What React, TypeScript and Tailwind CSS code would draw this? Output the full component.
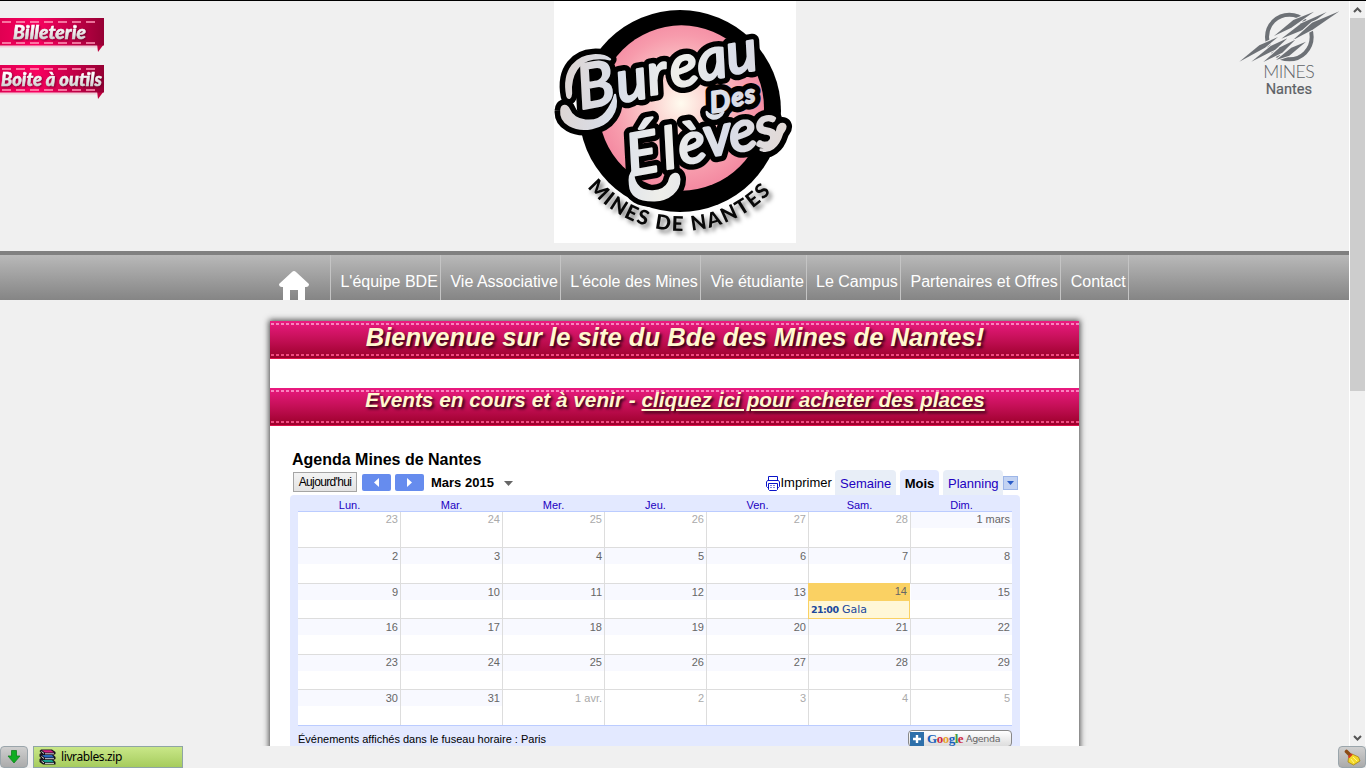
import React from "react";

const days = ["Lun.", "Mar.", "Mer.", "Jeu.", "Ven.", "Sam.", "Dim."];

const weeks: { height: string; line: string; cells: string[] }[] = [
  { height: "h-9", line: "leading-[15px]", cells: ["23", "24", "25", "26", "27", "28", "1 mars"] },
  { height: "h-9", line: "leading-[17px]", cells: ["2", "3", "4", "5", "6", "7", "8"] },
  { height: "h-[35px]", line: "leading-[17px]", cells: ["9", "10", "11", "12", "13", "14", "15"] },
  { height: "h-9", line: "leading-[17px]", cells: ["16", "17", "18", "19", "20", "21", "22"] },
  { height: "h-[35px]", line: "leading-[15px]", cells: ["23", "24", "25", "26", "27", "28", "29"] },
  { height: "h-[35px]", line: "leading-[17px]", cells: ["30", "31", "1 avr.", "2", "3", "4", "5"] },
];

const menu = [
  { label: "L'équipe BDE", width: "w-[110px]" },
  { label: "Vie Associative", width: "w-[120px]" },
  { label: "L'école des Mines", width: "w-[140px]" },
  { label: "Vie étudiante", width: "w-[106px]" },
  { label: "Le Campus", width: "w-[94px]" },
  { label: "Partenaires et Offres", width: "w-[160px]" },
  { label: "Contact", width: "w-[68px]" },
];

function Ribbon({ label, x, length, id }: { label: string; x: number; length: number; id: string }) {
  return (
    <svg className="block h-[38px] w-[108px]" viewBox="0 0 108 38">
      <defs>
        <linearGradient id={id}>
          <stop offset="0" stopColor="#e00052" />
          <stop offset=".35" stopColor="#fa0060" />
          <stop offset="1" stopColor="#960034" />
        </linearGradient>
        <linearGradient id={id + "t"} x2="0" y2="1">
          <stop offset=".3" stopColor="#fff" />
          <stop offset="1" stopColor="#c4c4c4" />
        </linearGradient>
      </defs>
      <path d="M0 28H97V30.5H0z" fill="#f5a0bd" opacity=".45" />
      <path d="M97 27H104L98 35z" fill="#c0003f" />
      <path d="M0 1H104V28.5H0z" fill={`url(#${id})`} />
      <path d="M2 5H98M2 26H98" stroke="#ff9abb" strokeWidth="1.4" strokeDasharray="9 5" />
      <text
        x={x}
        y="22"
        textLength={length}
        lengthAdjust="spacingAndGlyphs"
        fill={`url(#${id}t)`}
        stroke={`url(#${id}t)`}
        strokeWidth=".5"
        className="font-['Lato',sans-serif] text-[19px] font-black italic [filter:drop-shadow(1px_1px_1px_#500020aa)]"
      >
        {label}
      </text>
    </svg>
  );
}

function BdeLogo() {
  return (
    <svg className="block h-[242px] w-[242px] bg-white" viewBox="12 3 726 726">
      <defs>
        <radialGradient id="disc" cx="393" cy="310" r="255" gradientUnits="userSpaceOnUse">
          <stop offset="0" stopColor="#fffbef" />
          <stop offset=".35" stopColor="#fbd0ce" />
          <stop offset=".8" stopColor="#f79bac" />
          <stop offset="1" stopColor="#f48ba2" />
        </radialGradient>
        <linearGradient id="silver" x1="30" y1="300" x2="700" y2="400" gradientUnits="userSpaceOnUse">
          <stop offset="0" stopColor="#ddd5d3" />
          <stop offset=".25" stopColor="#d9dfea" />
          <stop offset=".5" stopColor="#eeeeea" />
          <stop offset=".75" stopColor="#d8dce8" />
          <stop offset="1" stopColor="#e2dad7" />
        </linearGradient>
        <path id="arc" d="M112 562A368 368 0 0 0 680 556" />
        <g id="lettering" strokeLinejoin="round" strokeLinecap="round" className="font-['Lato',sans-serif] font-medium italic">
          <text x="92 208 300 368 450 538" y="328 308 286 264 244 224" rotate="-10" fontSize="176">
            <tspan fontSize="184">B</tspan>ureau
          </text>
          <text x="484 548 588" y="338 319 310" rotate="-8" fontSize="74">
            <tspan fontSize="86">D</tspan>es
          </text>
          <text x="240 348 394 470 546 624" y="528 508 494 472 458 443" rotate="-10" fontSize="172">
            <tspan fontSize="174">É</tspan>lèves
          </text>
          <path d="M52 288C36 205 85 168 130 166C150 165 168 168 180 178C165 174 150 172 129 176C89 182 58 220 63 280C62 294 55 298 52 288z" />
          <path d="M34 331C35 314 50 313 57 329C70 366 139 376 168 338C182 320 190 305 195 285C207 335 176 375 126 384C74 394 30 370 34 331z" />
          <path d="M240 554C237 530 240 520 250 512C249 525 250 540 260 554C278 581 340 583 357 547C363 516 388 514 388 538C388 572 357 600 314 601C271 602 242 588 240 554z" />
          <path d="M470 336C482 350 503 352 520 336C515 349 500 358 486 355C476 352 470 345 470 336z" />
          <path d="M632 448C656 450 674 427 681 394C684 370 702 366 706 378C708 390 699 391 695 404C684 440 658 460 632 450z" />
        </g>
      </defs>
      <ellipse cx="390" cy="333" rx="303" ry="303" fill="#000" />
      <circle cx="394" cy="324" r="248" fill="url(#disc)" />
      <use href="#lettering" fill="#000" stroke="#000" strokeWidth="40" />
      <use href="#lettering" fill="url(#silver)" stroke="url(#silver)" strokeWidth="7" />
      <text
        fill="#080808"
        fontSize="61"
        textLength="622"
        className="font-['Lato',sans-serif] font-black [filter:drop-shadow(9px_10px_6px_#0008)]"
      >
        <textPath href="#arc" textLength="622">MINES DE NANTES</textPath>
      </text>
    </svg>
  );
}

function MinesLogo() {
  return (
    <svg className="block h-[98px] w-[108px]" viewBox="18 18 324 294">
      <circle cx="178" cy="111" r="67" fill="none" stroke="#6d7176" strokeWidth="12" />
      <g fill="#6d7176" stroke="#f0f0f0" strokeWidth="6" className="[paint-order:stroke]">
        <path d="M252 35L190 60L132 108L184 83z" />
        <path d="M290 36L214 70L154 116L218 90z" />
        <path d="M328 34L246 68L188 121L250 88z" />
        <path d="M28 185L88 136L144 111L105 143z" />
        <path d="M64 185L122 138L172 115L136 149z" />
        <path d="M100 186L150 142L196 119L157 158z" />
        <path d="M138 180L184 143L228 125L178 167z" />
      </g>
      <text x="100" y="234" textLength="154" fill="#5f6368" fontSize="53" className="font-['Lato',sans-serif] font-light">MINES</text>
      <text x="107" y="282" textLength="139" lengthAdjust="spacingAndGlyphs" fill="#5c6065" stroke="#5c6065" strokeWidth=".6" fontSize="45" className="font-['Roboto',sans-serif]">Nantes</text>
    </svg>
  );
}

function Banner({ children, size }: { children: React.ReactNode; size: string }) {
  return (
    <div className="flex h-[38px] flex-col justify-between border-b border-[#e0104c] bg-linear-to-b from-[#ea1a80] via-[#c40f56] to-[#9c002a] pt-[2px] pb-[2px]">
      <div className="h-[2px] shrink-0 bg-[repeating-linear-gradient(90deg,transparent_0_1px,#f983bd_1px_4px,transparent_4px_5px)]" />
      <div
        className={`flex h-0 grow items-center justify-center text-center leading-none font-bold italic whitespace-nowrap text-[#fff8cf] [text-shadow:2px_2px_3px_#000000d0] ${size}`}
      >
        {children}
      </div>
      <div className="h-[2px] shrink-0 bg-[repeating-linear-gradient(90deg,transparent_0_1px,#ef4b80_1px_4px,transparent_4px_5px)]" />
    </div>
  );
}

function Toolbar() {
  return (
    <div className="flex h-[25px] items-start text-[13px] leading-[25px] text-black">
      <div className="mt-[2px] ml-[3px] flex h-5 w-16 items-center justify-center border border-[#a5a5a5] bg-linear-to-b from-[#f3f3f3] to-[#e3e3e3] text-[12px] tracking-[-0.65px]">
        Aujourd'hui
      </div>
      <div className="mt-1 ml-[5px] flex h-[17px] w-[29px] items-center justify-center rounded-[2px] bg-[#668cee]">
        <svg className="h-[9px] w-[5px]" viewBox="0 0 5 9"><path d="M5 0V9L0 4.5z" fill="#fff" /></svg>
      </div>
      <div className="mt-1 ml-1 flex h-[17px] w-[29px] items-center justify-center rounded-[2px] bg-[#668cee]">
        <svg className="h-[9px] w-[5px]" viewBox="0 0 5 9"><path d="M0 0V9L5 4.5z" fill="#fff" /></svg>
      </div>
      <div className="ml-[7px] w-[73px] font-bold">Mars 2015</div>
      <svg className="mt-[11px] h-[5px] w-[9px]" viewBox="0 0 9 5"><path d="M0 0H9L4.5 5z" fill="#666" /></svg>
      <svg className="mt-[6px] ml-auto h-[15px] w-[14px]" viewBox="0 0 14 15" fill="#fff" stroke="#0a14c8">
        <path d="M2.5 5.5V.5H11.5V5.5" />
        <path d="M1.5 4.5H12.5L13.5 6V10.5L12.5 11.5H1.5L.5 10.5V6z" />
        <path d="M2.5 7.5H11.5V13.5L10.5 14.5H3.5L2.5 13.5z" />
        <path d="M4 9.5H10M4 11.5H10" stroke="#7c85dd" strokeDasharray="2 1" />
      </svg>
      <div className="w-[55px] pl-[0.5px]">Imprimer</div>
      <div className="h-[25px] w-[61px] rounded-t-[4px] bg-[#e8eef7] pl-[5px] leading-[27px] text-[#2200c1]">Semaine</div>
      <div className="ml-1 h-[25px] w-[39px] rounded-t-[4px] bg-[#e3e9ff] text-center leading-[27px] font-bold">Mois</div>
      <div className="ml-1 h-[25px] w-[60px] rounded-t-[4px] bg-[#e8eef7] pl-[5px] leading-[27px] text-[#2200c1]">Planning</div>
      <div className="mt-[6px] mr-[2px] flex h-[14px] w-[15px] items-center justify-center border border-[#9db6e8] bg-[#c3d3f2]">
        <svg className="h-[4px] w-[7px]" viewBox="0 0 7 4"><path d="M0 0H7L3.5 4z" fill="#2a5cc8" /></svg>
      </div>
    </div>
  );
}

function Cell({ label, week, day, line }: { label: string; week: number; day: number; line: string }) {
  const outside = (week === 0 && day < 6) || (week === 5 && day > 1);
  if (week === 2 && day === 5) {
    return (
      <div className="-mt-px mr-px -mb-px -ml-px flex w-[102px] shrink-0 flex-col border border-[#fad163] bg-[#fff7d7]">
        <div className="h-[17px] shrink-0 bg-[#fad163] pr-[2px] text-right leading-[15px] text-[#666]">{label}</div>
        <div className="h-[17px] shrink-0 pl-[2px] font-['DejaVu_Sans',sans-serif] text-[11px] leading-[18px] text-[#20489c]">
          <b className="text-[9.5px] tracking-[-0.55px]">21:00</b> Gala
        </div>
      </div>
    );
  }
  return (
    <div className={`w-[102px] shrink-0 text-right first:w-[103px] last:w-[101px] ${day < 6 ? "border-r border-[#dddddd]" : ""}`}>
      <div className={`h-4 pr-[2px] ${line} ${outside ? "text-[#aaa]" : "bg-[#f8f9ff] text-[#666]"}`}>{label}</div>
    </div>
  );
}

function Calendar() {
  return (
    <section className="ml-5 w-[730px] pt-6">
      <h3 className="h-5 pl-[2px] text-[16px] leading-5 font-bold text-black">Agenda Mines de Nantes</h3>
      <Toolbar />
      <div className="h-[270px] rounded-t-[4px] bg-[#e3e9ff] px-2">
        <div className="flex h-4 text-[11px] leading-5 text-[#2200c1]">
          {days.map((d) => <div key={d} className="w-[102px] pl-px text-center">{d}</div>)}
        </div>
        <div className="border-y border-[#bbccff] bg-white text-[11px]">
          {weeks.map((w, i) => (
            <div key={i} className={`flex ${w.height} ${i < 5 ? "border-b border-[#dddddd]" : ""}`}>
              {w.cells.map((c, j) => <Cell key={j} label={c} week={i} day={j} line={w.line} />)}
            </div>
          ))}
        </div>
        <div className="flex items-start justify-between pt-1 text-[11px] leading-[18px] text-black">
          <span>Événements affichés dans le fuseau horaire : Paris</span>
          <div className="flex h-[17px] w-[104px] items-center rounded-[4px] border border-[#888] bg-linear-to-b from-white to-[#ddd] pl-px">
            <svg className="h-[14px] w-[14px]" viewBox="0 0 14 14">
              <path d="M0 0H14V14H0z" fill="#2e70aa" />
              <path d="M7 3V11M3 7H11" stroke="#fff" strokeWidth="2.4" />
            </svg>
            <span className="ml-[3px] font-['Liberation_Serif',serif] text-[13px] leading-none font-bold tracking-[-0.5px]">
              <span className="text-[#1861bb]">G</span><span className="text-[#cf2740]">o</span><span className="text-[#e8a22c]">o</span><span className="text-[#1861bb]">g</span><span className="text-[#459b44]">l</span><span className="text-[#cf2740]">e</span>
            </span>
            <span className="ml-[3px] font-['DejaVu_Sans',sans-serif] text-[9.5px] tracking-[-0.35px] text-[#666]">Agenda</span>
          </div>
        </div>
      </div>
    </section>
  );
}

function Scrollbar() {
  return (
    <div className="flex h-full w-[17px] shrink-0 flex-col items-center border-x border-white bg-[#f0f0f0]">
      <svg className="h-[17px] w-[15px] shrink-0" viewBox="0 0 15 17"><path d="M4 11L7.5 7.5L11 11" fill="none" stroke="#555" strokeWidth="2" /></svg>
      <div className="h-[373px] w-full shrink-0 bg-[#cdcdcd]" />
      <svg className="mt-auto h-[17px] w-[15px] shrink-0" viewBox="0 0 15 17"><path d="M4 7L7.5 10.5L11 7" fill="none" stroke="#555" strokeWidth="2" /></svg>
    </div>
  );
}

function DownloadBar() {
  return (
    <footer className="flex h-[22px] w-full shrink-0 bg-[#f0f0f0]">
      <div className="flex w-7 items-center justify-center rounded-[4px] border border-[#9aa5ab] bg-linear-to-b from-[#cfcfcf] to-[#ababab]">
        <svg className="h-[14px] w-[14px]" viewBox="0 0 14 14"><path d="M4.5.5H9.5V6H13L7 13L1 6H4.5z" fill="#10ad22" stroke="#118020" strokeWidth=".8" /></svg>
      </div>
      <div className="ml-[5px] flex w-[150px] items-center border border-[#8fa5a5] bg-linear-to-b from-[#c9e788] to-[#a6cc5d] pl-[5px] text-[12px] text-black">
        <svg className="h-4 w-[17px]" viewBox="0 0 17 16">
          <path d="M2 .5H13L16.5 3V5L14.5 6L16.5 8V10L14.5 11L16.5 13V15.5H4L.5 13V10L2 9L.5 7.5V5L2 4L.5 2z" fill="#17111c" />
          <path d="M3 1.2H12L15 3.5H6z" fill="#d22283" />
          <path d="M3 6H13L15 8.5H6z" fill="#2867bb" />
          <path d="M3 11H13L15 13.3H6z" fill="#16a28c" />
          <path d="M6 4.8H15M6 9.7H15M6 14.4H15" stroke="#e7e3e9" strokeWidth=".9" />
          <path d="M2.5 2.5L5 4.5M2.5 7.5L5 9.5M2.5 12L5 14" stroke="#ddd" />
        </svg>
        <span className="ml-[5px] font-['Noto_Sans',sans-serif] text-[12px] tracking-[-0.4px]">livrables.zip</span>
      </div>
      <div className="ml-auto flex w-7 items-center justify-center rounded-[4px] border border-[#9aa5ab] bg-linear-to-b from-[#cfcfcf] to-[#ababab]">
        <svg className="h-[17px] w-[17px]" viewBox="0 0 17 17">
          <path d="M2.5 2.5L5.5 5.5" stroke="#8b4c16" strokeWidth="3.6" strokeLinecap="round" />
          <path d="M8 5L14.5 8L16 12L9.5 16L4 13L4.5 9z" fill="#f4d928" stroke="#a88414" strokeWidth=".8" />
          <path d="M4.5 8.5L8 5" stroke="#d43b20" strokeWidth="2" />
          <path d="M7 10L10 14M9 8L13 12" stroke="#fff48a" />
        </svg>
      </div>
    </footer>
  );
}

export default function App() {
  return (
    <div className="flex h-[768px] w-[1366px] flex-col overflow-hidden border-t border-black bg-[#f0f0f0] font-['Liberation_Sans',Arial,sans-serif]">
      <div className="flex h-[745px] shrink-0 overflow-hidden">
        <main className="w-[1349px] shrink-0">
          <header className="flex h-[250px] items-start">
            <div className="flex w-[554px] flex-col gap-[9px] pt-4">
              <Ribbon label="Billeterie" x={13} length={73} id="r1" />
              <Ribbon label="Boite à outils" x={1} length={101} id="r2" />
            </div>
            <BdeLogo />
            <div className="ml-auto pt-[5px] pr-[5px]"><MinesLogo /></div>
          </header>
          <nav className="flex h-[49px] border-t-4 border-[#808080] bg-linear-to-b from-[#b9b9b9] to-[#858585] pl-[270px] text-[16px] text-white">
            <a className="flex w-[61px] items-end border-r border-[#c4c4c4] pl-2">
              <svg className="h-[29px] w-8" viewBox="0 0 32 29"><path d="M16 0Q17 0 18 1L31 13Q31 16 28 16H27V29H20V19H12V29H5V16H4Q1 16 1 13L14 1Q15 0 16 0z" fill="#fff" /></svg>
            </a>
            {menu.map((m) => (
              <a key={m.label} className={`flex shrink-0 justify-end border-r border-[#c4c4c4] pt-[15px] pr-[2.2px] whitespace-nowrap ${m.width}`}>{m.label}</a>
            ))}
          </nav>
          <article className="mt-[21px] ml-[270px] h-[460px] w-[809px] bg-white shadow-[0_0_6px_1px_#444]">
            <Banner size="text-[25.6px]">
              <h1 className="-mt-1 pl-px">Bienvenue sur le site du Bde des Mines de Nantes!</h1>
            </Banner>
            <div className="h-[29px]" />
            <Banner size="text-[20.8px]">
              <h2 className="-mt-3 pl-px">Events en cours et à venir - <a className="underline decoration-2 underline-offset-2">cliquez ici pour acheter des places</a></h2>
            </Banner>
            <Calendar />
          </article>
        </main>
        <Scrollbar />
      </div>
      <DownloadBar />
    </div>
  );
}
